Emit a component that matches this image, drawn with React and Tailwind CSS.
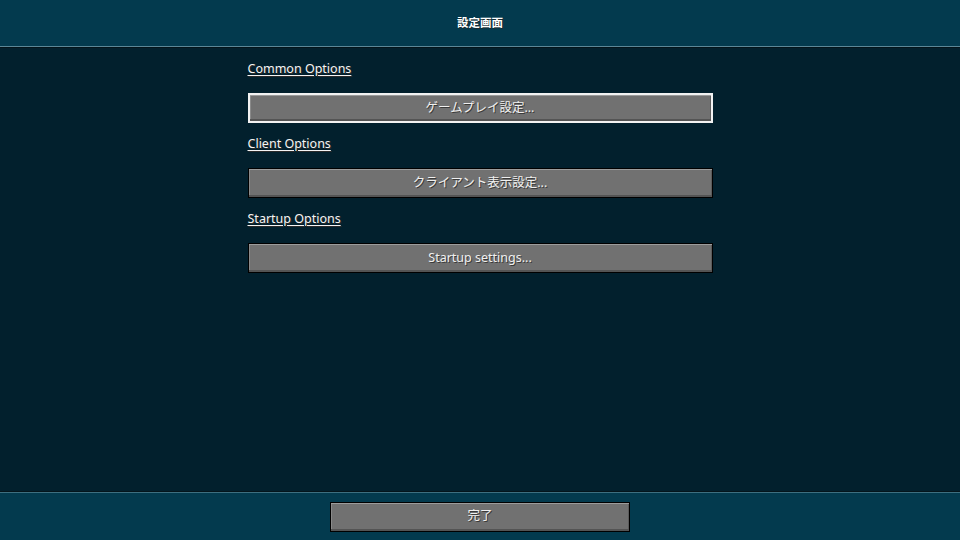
import React from "react";

const sections = [
  { label: "Common Options", button: "ゲームプレイ設定...", selected: true },
  { label: "Client Options", button: "クライアント表示設定..." },
  { label: "Startup Options", button: "Startup settings..." },
];

const McButton = ({ children, selected, className = "" }) => {
  return (
    <button
      className={
        "flex items-center justify-center h-[30px] bg-[#717171] text-[12.5px] text-[#f0f0f0] [text-shadow:1px_1px_0_#3a3a3a] shadow-[inset_0_1px_0_#9c9c9c,inset_0_-2px_0_#545454,inset_1px_0_0_#8a8a8a,inset_-1px_0_0_#5c5c5c] " +
        (selected ? "border-2 border-[#f2f2f2] " : "border border-black ") +
        className
      }
    >
      {children}
    </button>
  );
};

export default function App() {
  return (
    <div
      className="w-[960px] h-[540px] flex flex-col bg-[#02202d] overflow-hidden"
      style={{ fontFamily: '"Noto Sans", "Noto Sans CJK JP", sans-serif' }}
    >
      {/* header */}
      <div className="h-[46px] bg-[#033a4e] flex items-center justify-center text-[11.5px] font-bold text-white [text-shadow:1px_1px_0_#1a2a30]">
        設定画面
      </div>
      <div className="h-px bg-[#5b8797]" />
      <div className="h-px bg-[#04141b]" />

      {/* options list */}
      <div className="flex-1 flex flex-col items-center pt-[12px]">
        <div className="w-[465px] flex flex-col">
          {sections.map((s) => (
            <div key={s.label} className="flex flex-col mb-[12px]">
              <div className="h-[18px] leading-[18px] text-[12.5px] text-[#f4f4f4] underline underline-offset-2 [text-shadow:1px_1px_0_#2a2a2a]">
                {s.label}
              </div>
              <McButton selected={s.selected} className="mt-[15px] w-[465px]">
                {s.button}
              </McButton>
            </div>
          ))}
        </div>
      </div>

      {/* footer */}
      <div className="h-px bg-[#04141b]" />
      <div className="h-px bg-[#3d6f80]" />
      <div className="h-[47px] bg-[#033a4e] flex items-center justify-center">
        <McButton className="w-[300px]">完了</McButton>
      </div>
    </div>
  );
}
